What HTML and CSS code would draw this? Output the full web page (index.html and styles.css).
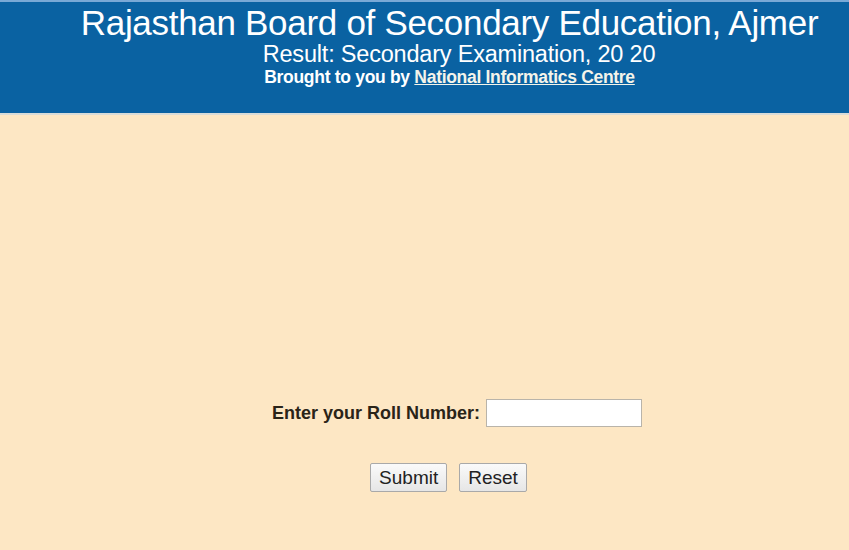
FILE: index.html
```html
<!DOCTYPE html>
<html>
<head>
<meta charset="utf-8">
<title>RBSE Result</title>
<link rel="stylesheet" href="styles.css">
</head>
<body>
<div class="header">
  <div class="header-inner">
    <div class="title">Rajasthan Board of Secondary Education, Ajmer</div>
    <div class="subtitle">Result: Secondary Examination, 20 20</div>
    <div class="credit">Brought to you by <a href="#">National Informatics Centre</a></div>
  </div>
</div>
<div class="main">
  <form class="roll-form">
    <div class="row">
      <label class="label" for="roll">Enter your Roll Number:</label>
      <input class="roll-input" id="roll" type="text">
    </div>
    <div class="buttons">
      <button class="btn" type="button">Submit</button>
      <button class="btn" type="reset">Reset</button>
    </div>
  </form>
</div>
</body>
</html>
```
FILE: styles.css
```css
html, body {
  margin: 0;
  padding: 0;
  height: 100%;
}
body {
  background: #fde7c4;
  font-family: "Liberation Sans", Arial, sans-serif;
}
.header {
  background: #0a62a2;
  border-top: 2px solid #79a9d6;
  border-bottom: 2px solid #d9dcd8;
  height: 115px;
  box-sizing: border-box;
  color: #fff;
}
.header-inner {
  padding-left: 50px;
  text-align: center;
}
.title {
  font-size: 35px;
  line-height: 38px;
  padding-top: 2px;
  letter-spacing: -0.3px;
}
.subtitle {
  font-size: 23.5px;
  line-height: 24px;
  padding-left: 19px;
  letter-spacing: -0.2px;
}
.credit {
  font-size: 17.5px;
  font-weight: bold;
  line-height: 22px;
  letter-spacing: -0.3px;
}
.credit a {
  color: #f4f4ea;
}
.main {
  display: flex;
  justify-content: center;
  padding-top: 284px;
}
.roll-form {
  display: flex;
  flex-direction: column;
  align-items: center;
}
.row {
  display: flex;
  align-items: center;
  gap: 6px;
  padding-left: 65px;
}
.label {
  font-size: 18px;
  font-weight: bold;
  color: #2a2418;
}
.roll-input {
  width: 156px;
  height: 28px;
  box-sizing: border-box;
  border: 1px solid #b9b4aa;
  background: #fff;
  margin: 0;
}
.buttons {
  display: flex;
  gap: 12px;
  margin-top: 36px;
  padding-left: 48px;
}
.btn {
  height: 29px;
  font-family: "Liberation Sans", Arial, sans-serif;
  font-size: 19px;
  color: #222;
  background: linear-gradient(#fafafa, #e6e6e6);
  border: 1px solid #a9a9a9;
  border-radius: 2px;
  padding: 0 8px;
}
```
